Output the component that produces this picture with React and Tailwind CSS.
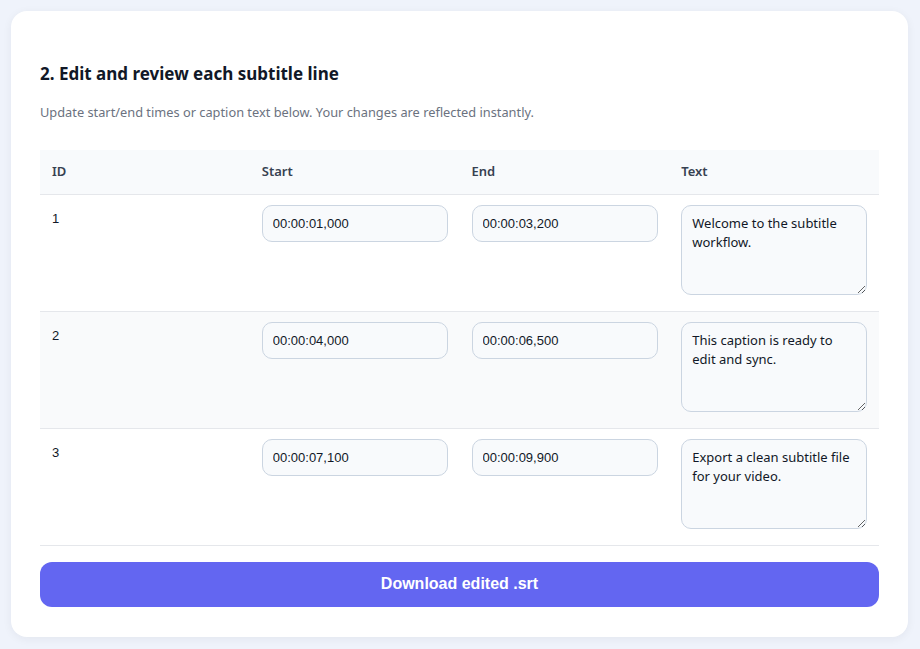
export default function App() {
  const rows = [
    ["1", "00:00:01,000", "00:00:03,200", "Welcome to the subtitle workflow."],
    ["2", "00:00:04,000", "00:00:06,500", "This caption is ready to edit and sync."],
    ["3", "00:00:07,100", "00:00:09,900", "Export a clean subtitle file for your video."],
  ];
  const font = { fontFamily: '"Segoe UI", "Noto Sans", "Open Sans", sans-serif' };
  return (
    <div className="min-h-[649px] bg-[#eff3fb] pt-[11px] pl-[11px]" style={font}>
      <div className="w-[897px] h-[626px] bg-white rounded-[16px] shadow-[0_2px_10px_rgba(30,41,59,0.06)] px-[29px] pt-[52px]">
        <h2 className="text-[17px] font-bold text-[#111827] leading-[22px]">2. Edit and review each subtitle line</h2>
        <p className="text-[12.8px] text-[#6b7280] mt-[18px] leading-[18px]">Update start/end times or caption text below. Your changes are reflected instantly.</p>
        <table className="w-full mt-[29px] border-collapse table-fixed text-[13px]">
          <thead>
            <tr className="bg-[#f8fafc] border-b border-[#e5e7eb] h-[44px]">
              {["ID", "Start", "End", "Text"].map((h) => (
                <th key={h} className="text-left font-semibold text-[#374151] px-[12px] w-1/4">{h}</th>
              ))}
            </tr>
          </thead>
          <tbody>
            {rows.map((r, i) => (
              <tr key={r[0]} className={`border-b border-[#e5e7eb] ${i === 1 ? "bg-[#f9fafb]" : ""}`}>
                <td className="align-top px-[12px] pt-[14px] text-[#111827]" style={{ fontFamily: '"Liberation Sans", Arial, sans-serif' }}>{r[0]}</td>
                {[r[1], r[2]].map((v, j) => (
                  <td key={j} className="align-top px-[12px] pt-[10px]">
                    <input defaultValue={v} className="w-[186px] h-[37px] rounded-[10px] border border-[#cbd5e1] bg-[#f8fafc] px-[10px] text-[13px] text-[#111827]" style={{ fontFamily: '"Liberation Sans", Arial, sans-serif' }} />
                  </td>
                ))}
                <td className="align-top px-[12px] pt-[10px] pb-[16px]">
                  <textarea defaultValue={r[3]} className="block w-[186px] h-[90px] rounded-[10px] border border-[#cbd5e1] bg-[#f8fafc] px-[10px] py-[8px] text-[13px] leading-[19px] text-[#111827]" style={font} />
                </td>
              </tr>
            ))}
          </tbody>
        </table>
        <button className="mt-[16px] w-full h-[45px] rounded-[12px] bg-[#6366f1] text-white text-[16px] font-bold" style={{ fontFamily: '"Liberation Sans", Arial, sans-serif' }}>Download edited .srt</button>
      </div>
    </div>
  );
}
